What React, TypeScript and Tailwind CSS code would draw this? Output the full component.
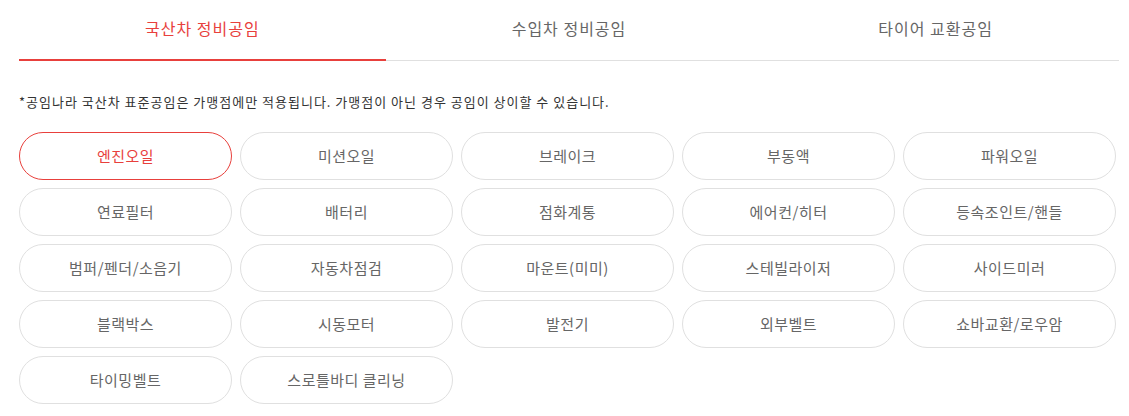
import { useState } from "react";

const tabs = ["국산차 정비공임", "수입차 정비공임", "타이어 교환공임"];

const items = [
  "엔진오일",
  "미션오일",
  "브레이크",
  "부동액",
  "파워오일",
  "연료필터",
  "배터리",
  "점화계통",
  "에어컨/히터",
  "등속조인트/핸들",
  "범퍼/펜더/소음기",
  "자동차점검",
  "마운트(미미)",
  "스테빌라이저",
  "사이드미러",
  "블랙박스",
  "시동모터",
  "발전기",
  "외부벨트",
  "쇼바교환/로우암",
  "타이밍벨트",
  "스로틀바디 클리닝",
];

export default function App() {
  const [tab, setTab] = useState(0);
  const [selected, setSelected] = useState(0);

  return (
    <div
      className="min-h-[416px] w-full bg-white"
      style={{ fontFamily: '"Noto Sans CJK KR", "Noto Sans", sans-serif' }}
    >
      <div className="ml-[19px] w-[1100px]">
        {/* Tabs */}
        <div className="grid grid-cols-3">
          {tabs.map((label, i) => (
            <button
              key={label}
              onClick={() => setTab(i)}
              className={`flex h-[61px] items-center justify-center pb-[4px] text-[16px] tracking-[1px] ${
                tab === i
                  ? "border-b-2 border-[#e8403c] text-[#e8403c]"
                  : "border-b border-[#e0e0e0] text-[#666666]"
              }`}
            >
              {label}
            </button>
          ))}
        </div>

        <p className="mt-[32px] text-[13px] leading-[18px] tracking-[1px] text-[#333333]">
          *공임나라 국산차 표준공임은 가맹점에만 적용됩니다. 가맹점이 아닌 경우 공임이 상이할 수 있습니다.
        </p>

        {/* Items */}
        <div className="mt-[21px] grid w-[1097px] grid-cols-5 gap-2">
          {items.map((label, i) => (
            <button
              key={label}
              onClick={() => setSelected(i)}
              className={`flex h-12 items-center justify-center rounded-full border text-[15px] tracking-[0.5px] ${
                selected === i
                  ? "border-[#e8403c] text-[#e8403c]"
                  : "border-[#e0e0e0] text-[#666666]"
              }`}
            >
              {label}
            </button>
          ))}
        </div>
      </div>
    </div>
  );
}
